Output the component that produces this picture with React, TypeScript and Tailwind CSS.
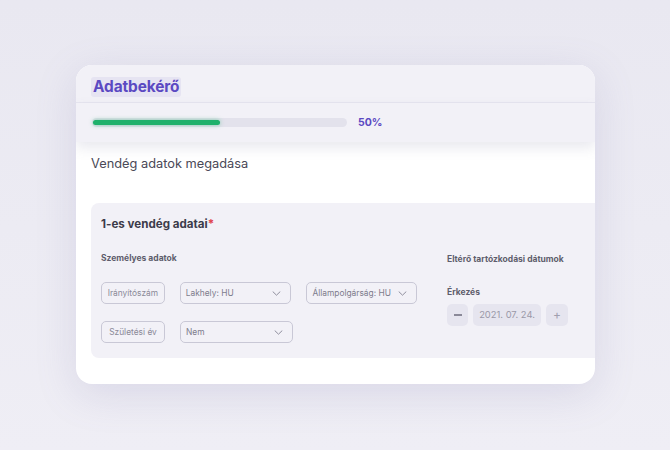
import React from "react";

const Chevron = () => (
  <svg width="9" height="5" viewBox="0 0 9 5" fill="none" className="shrink-0">
    <path d="M1 0.8l3.5 3.4 3.5-3.4" stroke="#8f8e9d" strokeWidth="1" strokeLinecap="round" strokeLinejoin="round" />
  </svg>
);

const Input = ({ label, w }: { label: string; w: string }) => (
  <div className={`${w} h-[22px] border border-[#c9c8d6] rounded-[5px] flex items-center justify-center whitespace-nowrap text-[8.4px] text-[#8a8998]`}>
    {label}
  </div>
);

const Select = ({ label, w }: { label: string; w: string }) => (
  <div className={`${w} h-[22px] border border-[#c9c8d6] rounded-[5px] flex items-center justify-between pl-[5px] pr-[9px] whitespace-nowrap text-[8.4px] text-[#7d7c8c]`}>
    <span>{label}</span>
    <Chevron />
  </div>
);

export default function App() {
  return (
    <div
      className="w-[670px] h-[450px] bg-gradient-to-b from-[#e9e8f1] to-[#efeef5] pt-[65px] pl-[76px]"
      style={{ fontFamily: "Inter, 'Noto Sans', sans-serif" }}
    >
      <div className="w-[519px] h-[319px] bg-white rounded-[16px] overflow-hidden shadow-[0_10px_40px_rgba(120,115,170,0.18)] flex flex-col">
        <div className="bg-[#f2f1f7] h-[38px] pl-[15px] pt-[9px] border-b border-[#e6e5ef]">
          <span className="inline-block bg-[#e6e4f2] rounded-[3px] px-[2px] h-[20px] leading-[20px] text-[15.4px] font-bold text-[#5b49c2] tracking-[-0.1px]">
            Adatbekérő
          </span>
        </div>
        <div className="bg-[#f2f1f7] h-[39px] flex items-center pl-[16px] shadow-[0_6px_12px_rgba(110,105,150,0.15)] relative z-10">
          <div className="w-[255px] h-[9px] rounded-full bg-[#e3e2ec] flex items-center px-[1px]">
            <div className="w-[127px] h-[5px] rounded-full bg-[#1fb16b] shadow-[0_0_4px_rgba(31,177,107,0.5)]" />
          </div>
          <span className="ml-[11px] text-[10.5px] font-bold text-[#5b49c2]">50%</span>
        </div>
        <div className="pl-[15px] pt-[13px]">
          <div className="text-[12.8px] text-[#4a4957] leading-[18px]">Vendég adatok megadása</div>
          <div className="mt-[30px] w-[560px] h-[155px] bg-[#f2f1f7] rounded-[8px] pl-[10px] pt-[14px]">
            <div className="text-[11.6px] font-bold text-[#3c3b4a] leading-[14px]">
              1-es vendég adatai<span className="text-[#e0434f]">*</span>
            </div>
            <div className="flex mt-[16px]">
              <div className="w-[316px] flex flex-col">
                <div className="text-[8.5px] font-bold text-[#5e5d6c] leading-[12px] mt-[5px]">Személyes adatok</div>
                <div className="flex gap-[15px] mt-[18px]">
                  <Input label="Irányítószám" w="w-[64px]" />
                  <Select label="Lakhely: HU" w="w-[112px]" />
                  <Select label="Állampolgárság: HU" w="w-[111px]" />
                </div>
                <div className="flex gap-[15px] mt-[17px]">
                  <Input label="Születési év" w="w-[64px]" />
                  <Select label="Nem" w="w-[113px]" />
                </div>
              </div>
              <div className="ml-[30px] flex flex-col">
                <div className="text-[8.5px] font-bold text-[#5e5d6c] leading-[12px] mt-[6px]">Eltérő tartózkodási dátumok</div>
                <div className="text-[8.5px] font-bold text-[#5e5d6c] leading-[12px] mt-[21px]">Érkezés</div>
                <div className="flex gap-[5px] mt-[6px]">
                  <div className="w-[21px] h-[22px] rounded-[5px] bg-[#e6e5ef] flex items-center justify-center">
                    <div className="w-[8px] h-[1.2px] bg-[#8a8998]" />
                  </div>
                  <div className="w-[68px] h-[22px] rounded-[5px] bg-[#e6e5ef] flex items-center justify-center text-[9.4px] text-[#9a99a8]">
                    2021. 07. 24.
                  </div>
                  <div className="w-[22px] h-[22px] rounded-[5px] bg-[#e6e5ef] flex items-center justify-center text-[12px] text-[#a09fae] leading-none">
                    +
                  </div>
                </div>
              </div>
            </div>
          </div>
        </div>
      </div>
    </div>
  );
}
